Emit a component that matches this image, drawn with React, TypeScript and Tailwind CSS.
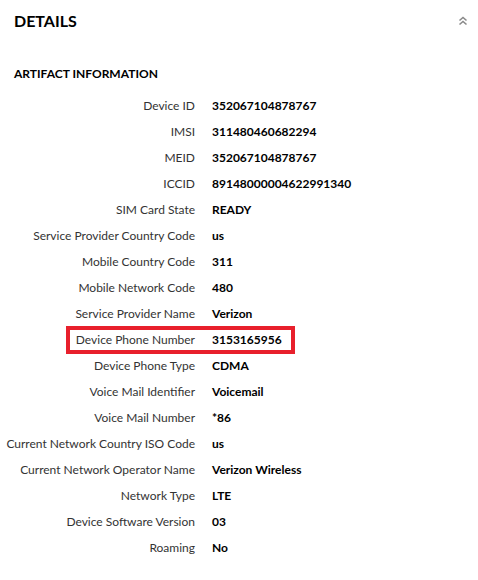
import React from 'react';

const rows: [string, string][] = [
  ['Device ID', '352067104878767'],
  ['IMSI', '311480460682294'],
  ['MEID', '352067104878767'],
  ['ICCID', '89148000004622991340'],
  ['SIM Card State', 'READY'],
  ['Service Provider Country Code', 'us'],
  ['Mobile Country Code', '311'],
  ['Mobile Network Code', '480'],
  ['Service Provider Name', 'Verizon'],
  ['Device Phone Number', '3153165956'],
  ['Device Phone Type', 'CDMA'],
  ['Voice Mail Identifier', 'Voicemail'],
  ['Voice Mail Number', '*86'],
  ['Current Network Country ISO Code', 'us'],
  ['Current Network Operator Name', 'Verizon Wireless'],
  ['Network Type', 'LTE'],
  ['Device Software Version', '03'],
  ['Roaming', 'No'],
];

function DoubleChevron() {
  return (
    <svg width="10" height="10" viewBox="0 0 10 10" fill="none" stroke="#8a8a8a" strokeWidth="1.6">
      <path d="M1.5 4.5 L5 1.5 L8.5 4.5" />
      <path d="M1.5 8.5 L5 5.5 L8.5 8.5" />
    </svg>
  );
}

export default function App() {
  return (
    <div className="w-[478px] h-[580px] bg-white text-[#222] font-['Lato',sans-serif]">
      <div className="flex items-center justify-between pl-[14px] pr-[10px] h-[42px]">
        <h2 className="text-[16px] font-bold text-black">DETAILS</h2>
        <DoubleChevron />
      </div>

      <div className="pl-[14px] pt-[22px] text-[12px] font-bold text-black leading-[20px]">
        ARTIFACT INFORMATION
      </div>

      <div className="mt-[9px] grid grid-cols-[195px_1fr] gap-x-[17px] text-[12px]">
        {rows.map(([label, value]) => {
          const marked = label === 'Device Phone Number';
          return (
            <React.Fragment key={label}>
              <div className="relative h-[26px] flex items-center justify-end text-[#333] whitespace-nowrap">
                {marked && (
                  <div className="absolute top-[-1px] left-[66px] w-[229px] h-[28px] border-4 border-[#e8202c]" />
                )}
                {label}
              </div>
              <div className="h-[26px] flex items-center font-bold text-black">{value}</div>
            </React.Fragment>
          );
        })}
      </div>
    </div>
  );
}
